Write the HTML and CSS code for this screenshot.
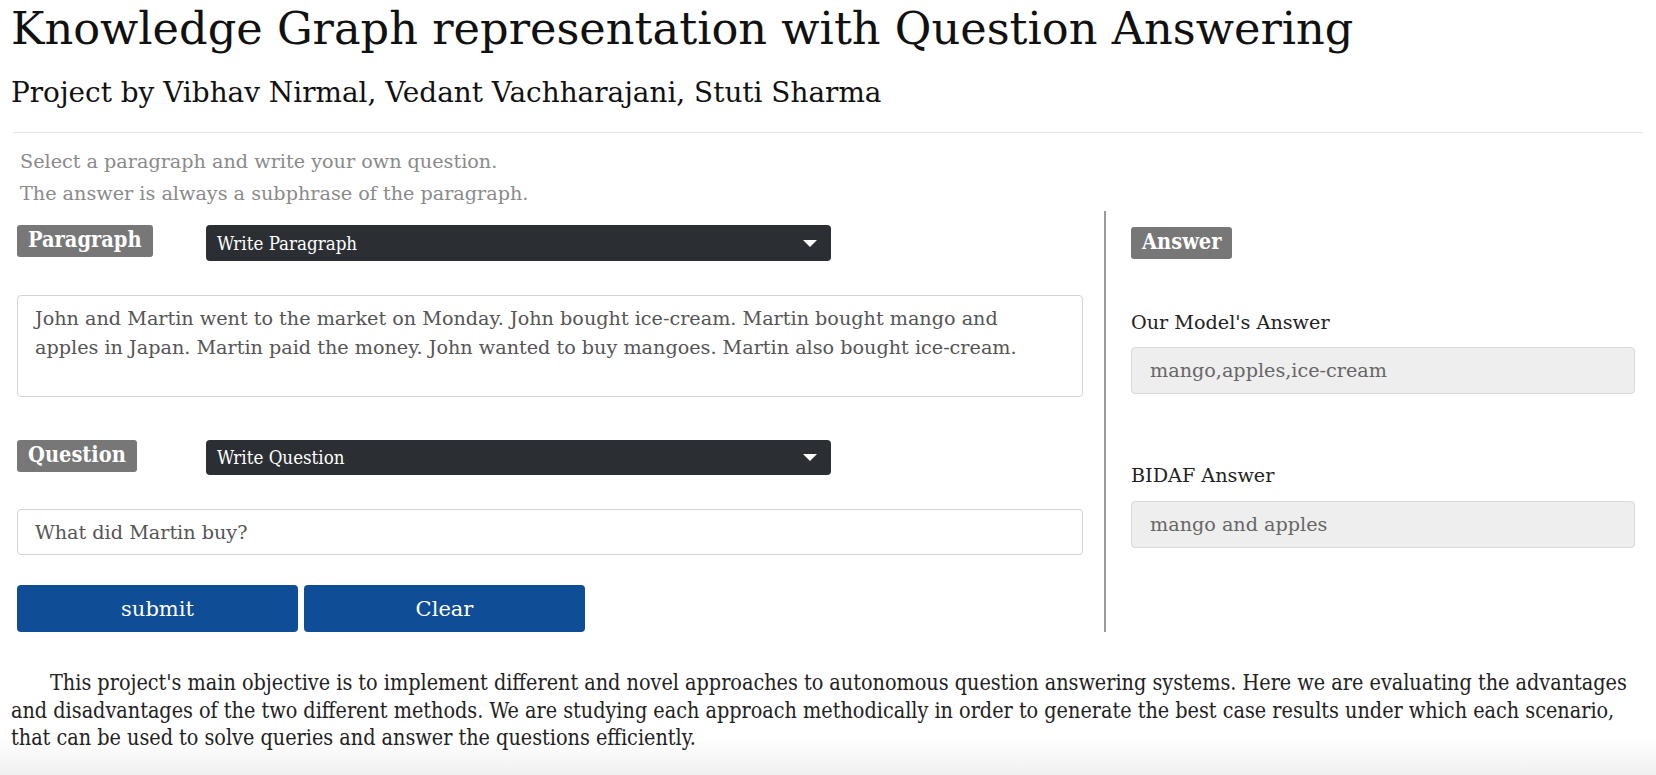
FILE: index.html
```html
<!DOCTYPE html>
<html>
<head>
<meta charset="utf-8">
<link rel="stylesheet" href="styles.css">
</head>
<body>
<header class="header">
  <h1 class="title">Knowledge Graph representation with Question Answering</h1>
  <h4 class="subtitle">Project by Vibhav Nirmal, Vedant Vachharajani, Stuti Sharma</h4>
</header>
<hr class="rule">
<div class="intro">
  <p class="hint">Select a paragraph and write your own question.</p>
  <p class="hint">The answer is always a subphrase of the paragraph.</p>
</div>
<main class="row">
  <section class="left">
    <div class="picker">
      <span class="badge">Paragraph</span>
      <div class="dropdown"><span>Write Paragraph</span><span class="caret"></span></div>
    </div>
    <div class="textarea">John and Martin went to the market on Monday. John bought ice-cream. Martin bought mango and apples in Japan. Martin paid the money. John wanted to buy mangoes. Martin also bought ice-cream.</div>
    <div class="picker picker-q">
      <span class="badge">Question</span>
      <div class="dropdown"><span>Write Question</span><span class="caret"></span></div>
    </div>
    <div class="input">What did Martin buy?</div>
    <div class="buttons">
      <button class="btn">submit</button>
      <button class="btn">Clear</button>
    </div>
  </section>
  <section class="right">
    <span class="badge">Answer</span>
    <label class="ans-label first">Our Model's Answer</label>
    <div class="ans-box">mango,apples,ice-cream</div>
    <label class="ans-label second">BIDAF Answer</label>
    <div class="ans-box">mango and apples</div>
  </section>
</main>
<p class="about">This project's main objective is to implement different and novel approaches to autonomous question answering systems. Here we are evaluating the advantages and disadvantages of the two different methods. We are studying each approach methodically in order to generate the best case results under which each scenario, that can be used to solve queries and answer the questions efficiently.</p>
</body>
</html>
```
FILE: styles.css
```css
* { box-sizing: border-box; }
html, body { height: 100%; }
body {
  margin: 0;
  font-family: "DejaVu Serif", serif;
  color: #1a1a1a;
  background: linear-gradient(to bottom, #fff 0, #fff 738px, #f0f0f0 775px);
}
.header { padding: 0 11px; }
.title {
  font-weight: normal;
  font-size: 44.7px;
  line-height: 54px;
  margin: 0;
  padding-top: 2px;
  color: #111;
}
.subtitle {
  font-weight: normal;
  font-size: 27.9px;
  line-height: 34px;
  margin: 20px 0 0 0;
  color: #111;
}
.rule {
  margin: 22px 13px 0 13px;
  border: 0;
  border-top: 1px solid #e6e6e6;
}
.intro { padding: 13px 20px 0; }
.hint {
  margin: 0;
  color: #8a8a8a;
  font-size: 19.2px;
  line-height: 31.7px;
}
.row {
  display: flex;
  margin-top: 2px;
}
.left {
  width: 1106px;
  padding: 14px 21px 0 17px;
  border-right: 2px solid #9a9a9a;
}
.right {
  flex: 1;
  padding: 16px 21px 0 25px;
  display: flex;
  flex-direction: column;
  align-items: flex-start;
}
.picker {
  display: grid;
  grid-template-columns: 189px 625px;
  align-items: start;
}
.picker .badge { justify-self: start; }
.picker-q { margin-top: 43px; }
.badge {
  display: inline-block;
  background: #777;
  color: #fff;
  font-weight: bold;
  font-size: 21.6px;
  line-height: 22px;
  padding: 4px 11px 6px;
  border-radius: 3px;
  font-stretch: condensed;
}
.dropdown {
  height: 36px;
  background: #2b2f33;
  color: #fff;
  border-radius: 4px;
  display: flex;
  align-items: center;
  justify-content: space-between;
  padding: 0 12px 0 11px;
  font-size: 18.6px;
  font-stretch: condensed;
}
.picker-q .dropdown { height: 35px; }
.caret {
  width: 0; height: 0;
  border-left: 7px solid transparent;
  border-right: 7px solid transparent;
  border-top: 7px solid #fff;
  margin-right: 2px;
}
.textarea {
  margin-top: 34px;
  height: 102px;
  border: 1px solid #d4d4d4;
  border-radius: 4px;
  padding: 9px 17px;
  color: #555;
  font-size: 19.2px;
  line-height: 28.8px;
}
.input {
  margin-top: 34px;
  height: 46px;
  border: 1px solid #d4d4d4;
  border-radius: 4px;
  padding: 0 17px;
  display: flex;
  align-items: center;
  color: #555;
  font-size: 19.2px;
}
.buttons {
  display: flex;
  gap: 6px;
  margin-top: 30px;
}
.btn {
  width: 281px;
  height: 47px;
  background: #0f4d97;
  color: #fff;
  border: 0;
  border-radius: 4px;
  font-family: "DejaVu Serif", serif;
  font-size: 21px;
}
.ans-label {
  font-size: 19.2px;
  line-height: 29px;
  color: #222;
}
.ans-label.first { margin-top: 49px; }
.ans-label.second { margin-top: 67px; }
.ans-box {
  margin-top: 10px;
  width: 504px;
  height: 47px;
  background: #eee;
  border: 1px solid #d8d8d8;
  border-radius: 4px;
  padding: 0 18px;
  display: flex;
  align-items: center;
  color: #666;
  font-size: 19.2px;
}
.ans-label.second + .ans-box { margin-top: 11px; }
.about {
  margin: 37px 0 0 0;
  padding: 0 11px;
  text-indent: 39px;
  font-size: 21.4px;
  line-height: 27.5px;
  font-stretch: condensed;
  color: #222;
}
```
